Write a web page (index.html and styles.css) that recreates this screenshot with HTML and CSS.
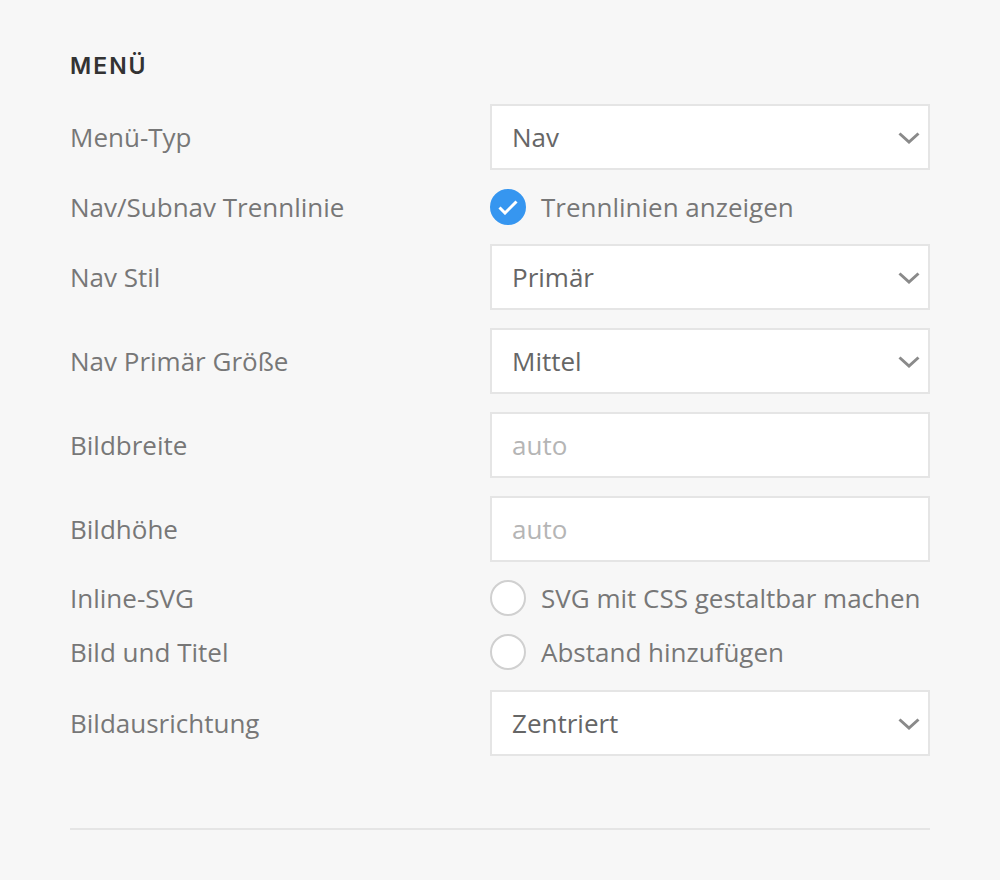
FILE: index.html
```html
<!DOCTYPE html>
<html lang="de">
<head>
    <meta charset="UTF-8">
    <meta name="viewport" content="width=device-width, initial-scale=1.0">
    <title>Menü</title>
    <link rel="stylesheet" href="styles.css">
</head>
<body>
    <div class="panel">
        <h3 class="panelTitle">Menü</h3>

        <div class="field">
            <label class="fieldLabel" for="menu_typ">Menü-Typ</label>
            <div class="selectBox">
                <select id="menu_typ" class="control">
                    <option>Nav</option>
                    <option>Subnav</option>
                </select>
                <svg class="chevron" width="22" height="12" viewBox="0 0 22 12"><polyline points="1.5,1.5 11,10 20.5,1.5" fill="none" stroke="#8a8a8a" stroke-width="3"/></svg>
            </div>
        </div>

        <div class="field toggleRow first">
            <span class="fieldLabel">Nav/Subnav Trennlinie</span>
            <label class="toggle">
                <span class="check checked">
                    <svg width="22" height="16" viewBox="0 0 22 16"><polyline points="2.5,8.5 8,14 19.5,2.5" fill="none" stroke="#fff" stroke-width="3"/></svg>
                </span>
                Trennlinien anzeigen
            </label>
        </div>

        <div class="field">
            <label class="fieldLabel" for="nav_stil">Nav Stil</label>
            <div class="selectBox">
                <select id="nav_stil" class="control">
                    <option>Primär</option>
                    <option>Standard</option>
                </select>
                <svg class="chevron" width="22" height="12" viewBox="0 0 22 12"><polyline points="1.5,1.5 11,10 20.5,1.5" fill="none" stroke="#8a8a8a" stroke-width="3"/></svg>
            </div>
        </div>

        <div class="field">
            <label class="fieldLabel" for="nav_groesse">Nav Primär Größe</label>
            <div class="selectBox">
                <select id="nav_groesse" class="control">
                    <option>Mittel</option>
                    <option>Klein</option>
                    <option>Groß</option>
                </select>
                <svg class="chevron" width="22" height="12" viewBox="0 0 22 12"><polyline points="1.5,1.5 11,10 20.5,1.5" fill="none" stroke="#8a8a8a" stroke-width="3"/></svg>
            </div>
        </div>

        <div class="field">
            <label class="fieldLabel" for="bildbreite">Bildbreite</label>
            <input type="text" id="bildbreite" class="control" placeholder="auto">
        </div>

        <div class="field">
            <label class="fieldLabel" for="bildhoehe">Bildhöhe</label>
            <input type="text" id="bildhoehe" class="control" placeholder="auto">
        </div>

        <div class="field toggleRow">
            <span class="fieldLabel">Inline-SVG</span>
            <label class="toggle">
                <span class="check"></span>
                SVG mit CSS gestaltbar machen
            </label>
        </div>

        <div class="field toggleRow last">
            <span class="fieldLabel">Bild und Titel</span>
            <label class="toggle">
                <span class="check"></span>
                Abstand hinzufügen
            </label>
        </div>

        <div class="field">
            <label class="fieldLabel" for="bildausrichtung">Bildausrichtung</label>
            <div class="selectBox">
                <select id="bildausrichtung" class="control">
                    <option>Zentriert</option>
                    <option>Oben</option>
                </select>
                <svg class="chevron" width="22" height="12" viewBox="0 0 22 12"><polyline points="1.5,1.5 11,10 20.5,1.5" fill="none" stroke="#8a8a8a" stroke-width="3"/></svg>
            </div>
        </div>

        <hr class="divider">
    </div>
</body>
</html>
```

FILE: styles.css
```css
body {
    margin: 0;
    background-color: #f7f7f7;
    font-family: "Open Sans", "Liberation Sans", sans-serif;
    color: #777;
}

.panel {
    padding: 50px 70px 0 70px;
}

.panelTitle {
    margin: 0 0 22px 0;
    font-family: Inter, "Open Sans", sans-serif;
    font-size: 23px;
    font-weight: 600;
    letter-spacing: 2px;
    text-transform: uppercase;
    color: #333;
    line-height: 32px;
}

.field {
    display: grid;
    grid-template-columns: 420px 440px;
    align-items: center;
    margin-bottom: 18px;
}

.fieldLabel {
    font-size: 26px;
    color: #777;
}

.selectBox {
    position: relative;
}

.control {
    box-sizing: border-box;
    width: 100%;
    height: 66px;
    padding: 0 20px;
    border: 2px solid #e5e5e5;
    background: #fff;
    font-family: "Open Sans", "Liberation Sans", sans-serif;
    font-size: 26px;
    color: #666;
    outline: none;
    border-radius: 0;
    -webkit-appearance: none;
    appearance: none;
}

.control::placeholder {
    color: #b5b5b5;
}

.chevron {
    position: absolute;
    right: 10px;
    top: 28px;
    pointer-events: none;
}

.toggleRow {
    height: 36px;
}

.toggleRow.first {
    height: 38px;
}

.toggleRow.last {
    margin-bottom: 20px;
}

.toggle {
    display: flex;
    align-items: center;
    gap: 15px;
    font-size: 26px;
    color: #777;
}

.check {
    box-sizing: border-box;
    width: 36px;
    height: 36px;
    border-radius: 50%;
    border: 2px solid #d0d0d0;
    background: #fff;
    display: flex;
    align-items: center;
    justify-content: center;
}

.check.checked {
    border-color: #3696f0;
    background: #3696f0;
}

.divider {
    margin: 72px 0 0 0;
    border: none;
    border-top: 2px solid #e5e5e5;
}
```
